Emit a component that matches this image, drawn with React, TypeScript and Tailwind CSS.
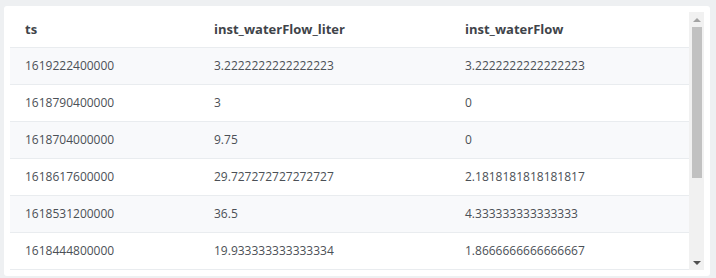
import React from "react";

const rows: [string, string, string][] = [
  ["1619222400000", "3.2222222222222223", "3.2222222222222223"],
  ["1618790400000", "3", "0"],
  ["1618704000000", "9.75", "0"],
  ["1618617600000", "29.727272727272727", "2.1818181818181817"],
  ["1618531200000", "36.5", "4.333333333333333"],
  ["1618444800000", "19.933333333333334", "1.8666666666666667"],
];

export default function App() {
  return (
    <div
      className="w-[716px] h-[278px] bg-[#eef0f2] pt-[6px] pl-[4px]"
      style={{ fontFamily: '"Open Sans", "Noto Sans", sans-serif' }}
    >
      <div className="w-[706px] h-[270px] bg-white rounded-[3px] p-[6px] flex overflow-hidden">
        <div className="flex-1 flex flex-col overflow-hidden">
          <div className="grid grid-cols-[189px_251px_1fr] h-[37px] border-b border-[#e9ecef] items-center text-[13px] font-bold text-[#3f444a]">
            <div className="pl-[15px]">ts</div>
            <div className="pl-[15px]">inst_waterFlow_liter</div>
            <div className="pl-[15px]">inst_waterFlow</div>
          </div>
          {rows.map((r, i) => (
            <div
              key={i}
              className={`grid grid-cols-[189px_251px_1fr] h-[37px] shrink-0 border-b border-[#e9ecef] items-center text-[12px] text-[#4b5056] ${
                i % 2 === 0 ? "bg-[#f8f9fb]" : "bg-white"
              }`}
            >
              <div className="pl-[15px]">{r[0]}</div>
              <div className="pl-[15px]">{r[1]}</div>
              <div className="pl-[15px]">{r[2]}</div>
            </div>
          ))}
        </div>
        <div className="w-[15px] h-[258px] bg-[#f1f1f1] flex flex-col items-center">
          <div className="h-[15px] w-full flex items-center justify-center">
            <div className="w-0 h-0 border-l-[4px] border-r-[4px] border-b-[4px] border-l-transparent border-r-transparent border-b-[#a3a3a3]" />
          </div>
          <div className="w-[10px] h-[151px] bg-[#c1c1c1] ml-[1px]" />
          <div className="flex-1" />
          <div className="h-[15px] w-full flex items-center justify-center">
            <div className="w-0 h-0 border-l-[4px] border-r-[4px] border-t-[4px] border-l-transparent border-r-transparent border-t-[#505050]" />
          </div>
        </div>
      </div>
    </div>
  );
}
